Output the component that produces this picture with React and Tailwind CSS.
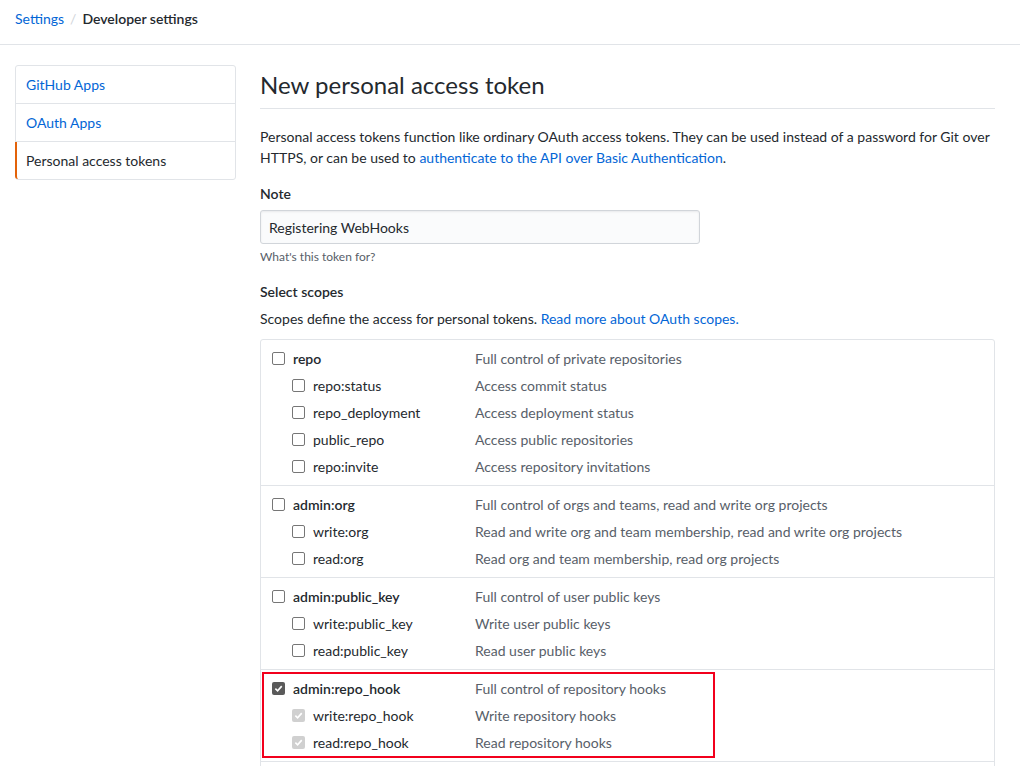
import React from 'react';

const groups = [
    {
        name: 'repo',
        desc: 'Full control of private repositories',
        children: [
            ['repo:status', 'Access commit status'],
            ['repo_deployment', 'Access deployment status'],
            ['public_repo', 'Access public repositories'],
            ['repo:invite', 'Access repository invitations'],
        ],
    },
    {
        name: 'admin:org',
        desc: 'Full control of orgs and teams, read and write org projects',
        children: [
            ['write:org', 'Read and write org and team membership, read and write org projects'],
            ['read:org', 'Read org and team membership, read org projects'],
        ],
    },
    {
        name: 'admin:public_key',
        desc: 'Full control of user public keys',
        children: [
            ['write:public_key', 'Write user public keys'],
            ['read:public_key', 'Read user public keys'],
        ],
    },
    {
        name: 'admin:repo_hook',
        desc: 'Full control of repository hooks',
        checked: true,
        highlight: true,
        children: [
            ['write:repo_hook', 'Write repository hooks'],
            ['read:repo_hook', 'Read repository hooks'],
        ],
    },
];

const Check = ({ state }) => {
    if (state === 'checked') {
        return (
            <span className="w-[13px] h-[13px] rounded-[2px] bg-[#5a5a5a] flex items-center justify-center shrink-0">
                <svg width="9" height="9" viewBox="0 0 10 10">
                    <path d="M1.5 5.2 L4 7.6 L8.6 2.4" stroke="#fff" strokeWidth="1.8" fill="none" />
                </svg>
            </span>
        );
    }
    if (state === 'disabled') {
        return (
            <span className="w-[13px] h-[13px] rounded-[2px] bg-[#d0d0d0] flex items-center justify-center shrink-0">
                <svg width="9" height="9" viewBox="0 0 10 10">
                    <path d="M1.5 5.2 L4 7.6 L8.6 2.4" stroke="#fff" strokeWidth="1.8" fill="none" />
                </svg>
            </span>
        );
    }
    return <span className="w-[13px] h-[13px] rounded-[2px] border border-[#767676] bg-white shrink-0" />;
};

const ScopeGroup = ({ group }) => (
    <div className="relative pt-[5px] pb-[5px] border-b border-[#e1e4e8]">
        <div className="h-[27px] flex items-center pl-[11px]">
            <div className="w-[203px] flex items-center gap-[8px]">
                <Check state={group.checked ? 'checked' : 'none'} />
                <span className="font-semibold text-[#24292e]">{group.name}</span>
            </div>
            <span className="text-[#586069]">{group.desc}</span>
        </div>
        {group.children.map(([name, desc]) => (
            <div key={name} className="h-[27px] flex items-center pl-[31px]">
                <div className="w-[183px] flex items-center gap-[8px]">
                    <Check state={group.checked ? 'disabled' : 'none'} />
                    <span className="text-[#24292e]">{name}</span>
                </div>
                <span className="text-[#586069]">{desc}</span>
            </div>
        ))}
        {group.highlight && (
            <div className="absolute left-[1px] top-[2px] w-[453px] h-[86px] border-2 border-[#f2001c] pointer-events-none" />
        )}
    </div>
);

const App = () => {
    return (
        <div className="min-h-[766px] bg-white text-[14px] leading-[21px] text-[#24292e]" style={{ fontFamily: '"Segoe UI", Lato, "Noto Sans", sans-serif' }}>
            {/* Breadcrumb */}
            <div className="h-[45px] border-b border-[#e1e4e8] px-[15px] pt-[8px] flex items-start gap-[6px]">
                <a className="text-[#0366d6]">Settings</a>
                <span className="text-[#d1d5da]">/</span>
                <span className="font-semibold text-[#24292e]">Developer settings</span>
            </div>

            <div className="flex pt-[20px] pl-[15px] gap-[24px]">
                {/* Sidebar */}
                <aside className="w-[221px] shrink-0">
                    <nav className="border border-[#e1e4e8] rounded-[3px]">
                        <a className="h-[38px] flex items-center pl-[10px] text-[#0366d6] border-b border-[#e1e4e8]">GitHub Apps</a>
                        <a className="h-[38px] flex items-center pl-[10px] text-[#0366d6] border-b border-[#e1e4e8]">OAuth Apps</a>
                        <a className="h-[37px] flex items-center pl-[8px] text-[#24292e] border-l-2 border-[#e36209] -ml-px rounded-bl-[3px]">
                            <span className="pl-[1px]">Personal access tokens</span>
                        </a>
                    </nav>
                </aside>

                {/* Content */}
                <main className="w-[735px]">
                    <div className="mt-[5px] pb-[8px] border-b border-[#e1e4e8] mb-[17px]">
                        <h1 className="text-[24px] leading-[30px] font-normal">New personal access token</h1>
                    </div>

                    <p>
                        Personal access tokens function like ordinary OAuth access tokens. They can be used instead of a password for Git over HTTPS, or can be used to{' '}
                        <a className="text-[#0366d6]">authenticate to the API over Basic Authentication</a>.
                    </p>

                    <div className="mt-[15px]">
                        <label className="block font-semibold">Note</label>
                        <div className="mt-[6px] w-[440px] h-[34px] bg-[#fafbfc] border border-[#d1d5da] rounded-[3px] flex items-center px-[8px] shadow-[inset_0_1px_2px_rgba(27,31,35,0.075)]">
                            Registering WebHooks
                        </div>
                        <p className="mt-[4px] text-[12px] leading-[18px] text-[#586069]">What's this token for?</p>
                    </div>

                    <div className="mt-[15px]">
                        <label className="block font-semibold">Select scopes</label>
                        <p className="mt-[6px]">
                            Scopes define the access for personal tokens.{' '}
                            <a className="text-[#0366d6]">Read more about OAuth scopes.</a>
                        </p>
                        <div className="mt-[10px] w-[735px] border border-[#e1e4e8] rounded-[3px]">
                            {groups.map((g) => (
                                <ScopeGroup key={g.name} group={g} />
                            ))}
                            <div className="h-[40px]" />
                        </div>
                    </div>
                </main>
            </div>
        </div>
    );
};

export default App;
